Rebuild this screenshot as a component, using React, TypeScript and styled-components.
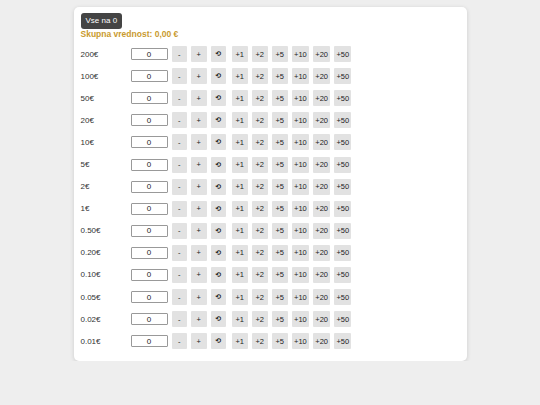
import * as React from "react";
import { useState } from "react";
import styled, { createGlobalStyle } from "styled-components";

const GlobalStyle = createGlobalStyle`
  html, body {
    margin: 0;
    padding: 0;
    background: #eeeeee;
    font-family: "Liberation Sans", Arial, sans-serif;
  }
`;

const Page = styled.div`
  padding-top: 7px;
  display: flex;
  justify-content: center;
`;

const Card = styled.div`
  width: 393px;
  box-sizing: border-box;
  background: #fff;
  border-radius: 5px;
  box-shadow: 0 1px 4px rgba(0, 0, 0, 0.15);
  padding: 6px 7px 9px;
`;

const ResetAllButton = styled.button`
  display: block;
  background: #444;
  color: #fff;
  border: none;
  border-radius: 3px;
  font-family: inherit;
  font-size: 8px;
  line-height: 10px;
  padding: 3px 5px;
  height: 16px;
  cursor: pointer;
`;

const Total = styled.div`
  color: #c99a2e;
  font-weight: bold;
  font-size: 8.5px;
  line-height: 10px;
  margin-bottom: 4px;
`;

const Row = styled.div`
  display: flex;
  align-items: center;
  height: 22.1px;
`;

const Label = styled.span`
  width: 50px;
  font-size: 8px;
  color: #333;
`;

const Count = styled.input`
  width: 37px;
  height: 12px;
  box-sizing: border-box;
  border: 1px solid #999;
  border-radius: 1px;
  text-align: center;
  font-family: inherit;
  font-size: 8px;
  padding: 0;
  margin-right: 4px;
  color: #222;
`;

const Step = styled.button<{ $gapLeft?: number }>`
  min-width: 15.5px;
  height: 16px;
  box-sizing: border-box;
  background: #e2e2e2;
  border: none;
  border-radius: 1px;
  font-family: inherit;
  font-size: 7.5px;
  color: #222;
  padding: 0 2px;
  margin-left: ${(p) => p.$gapLeft ?? 4}px;
  cursor: pointer;
`;

const Reset = styled(Step)`
  font-family: "DejaVu Sans", sans-serif;
  font-size: 7px;
  font-weight: bold;
`;

const DENOMS = [
  "200€", "100€", "50€", "20€", "10€", "5€", "2€", "1€",
  "0.50€", "0.20€", "0.10€", "0.05€", "0.02€", "0.01€",
];

const ADDS = [1, 2, 5, 10, 20, 50];

const App = () => {
  const [counts, setCounts] = useState<number[]>(DENOMS.map(() => 0));

  const change = (i: number, v: number) =>
    setCounts((c) => c.map((x, j) => (j === i ? Math.max(0, v) : x)));

  return (
    <Page>
      <GlobalStyle />
      <Card>
        <ResetAllButton onClick={() => setCounts(DENOMS.map(() => 0))}>
          Vse na 0
        </ResetAllButton>
        <Total>Skupna vrednost: 0,00 €</Total>
        {DENOMS.map((d, i) => (
          <Row key={d}>
            <Label>{d}</Label>
            <Count
              value={counts[i]}
              onChange={(e) => change(i, Number(e.target.value) || 0)}
            />
            <Step $gapLeft={0} onClick={() => change(i, counts[i] - 1)}>-</Step>
            <Step onClick={() => change(i, counts[i] + 1)}>+</Step>
            <Reset onClick={() => change(i, 0)}>⟲</Reset>
            {ADDS.map((a, k) => (
              <Step
                key={a}
                $gapLeft={k === 0 ? 6 : 4.5}
                onClick={() => change(i, counts[i] + a)}
              >
                +{a}
              </Step>
            ))}
          </Row>
        ))}
      </Card>
    </Page>
  );
};

export default App;
